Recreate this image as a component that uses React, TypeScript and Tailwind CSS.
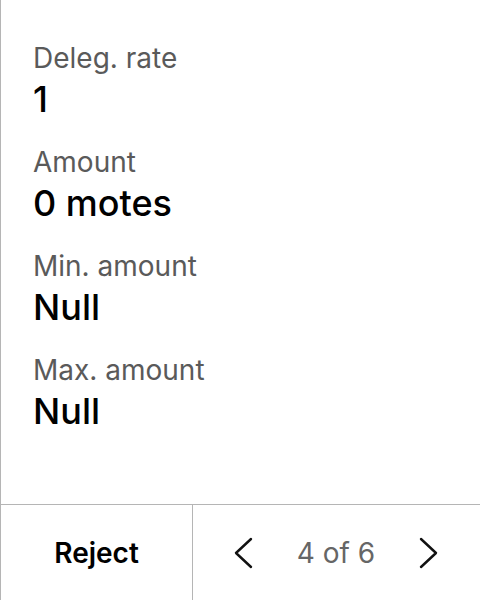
import type { FC } from 'react'

type Field = { label: string; value: string }

const fields: Field[] = [
  { label: 'Deleg. rate', value: '1' },
  { label: 'Amount', value: '0 motes' },
  { label: 'Min. amount', value: 'Null' },
  { label: 'Max. amount', value: 'Null' },
]

const Chevron: FC<{ dir: 'left' | 'right' }> = ({ dir }) => (
  <svg width="20" height="34" viewBox="0 0 20 34" fill="none" stroke="#111" strokeWidth="2.4" strokeLinecap="round" strokeLinejoin="round">
    {dir === 'left' ? <path d="M18 3 L3 17 L18 31" /> : <path d="M2 3 L17 17 L2 31" />}
  </svg>
)

export default function App() {
  return (
    <div
      className="flex h-[600px] w-[480px] flex-col border-l border-[#b5b5b5] bg-white"
      style={{ fontFamily: 'Inter, "Noto Sans", sans-serif' }}
    >
      <div className="flex flex-1 flex-col gap-[22px] px-[32px] pt-[39px]">
        {fields.map((f) => (
          <div key={f.label} className="flex flex-col">
            <span className="text-[28px] leading-[38px] text-[#5a5a5a]">{f.label}</span>
            <span className="text-[36px] leading-[44px] font-medium text-black">{f.value}</span>
          </div>
        ))}
      </div>
      <div className="flex h-[96px] border-t border-[#b5b5b5]">
        <button className="flex w-[192px] items-center justify-center border-r border-[#b5b5b5] text-[28px] font-semibold text-black">
          Reject
        </button>
        <div className="flex flex-1 items-center justify-between pl-[40px] pr-[41px]">
          <Chevron dir="left" />
          <span className="text-[28px] text-[#666]">4 of 6</span>
          <Chevron dir="right" />
        </div>
      </div>
    </div>
  )
}
